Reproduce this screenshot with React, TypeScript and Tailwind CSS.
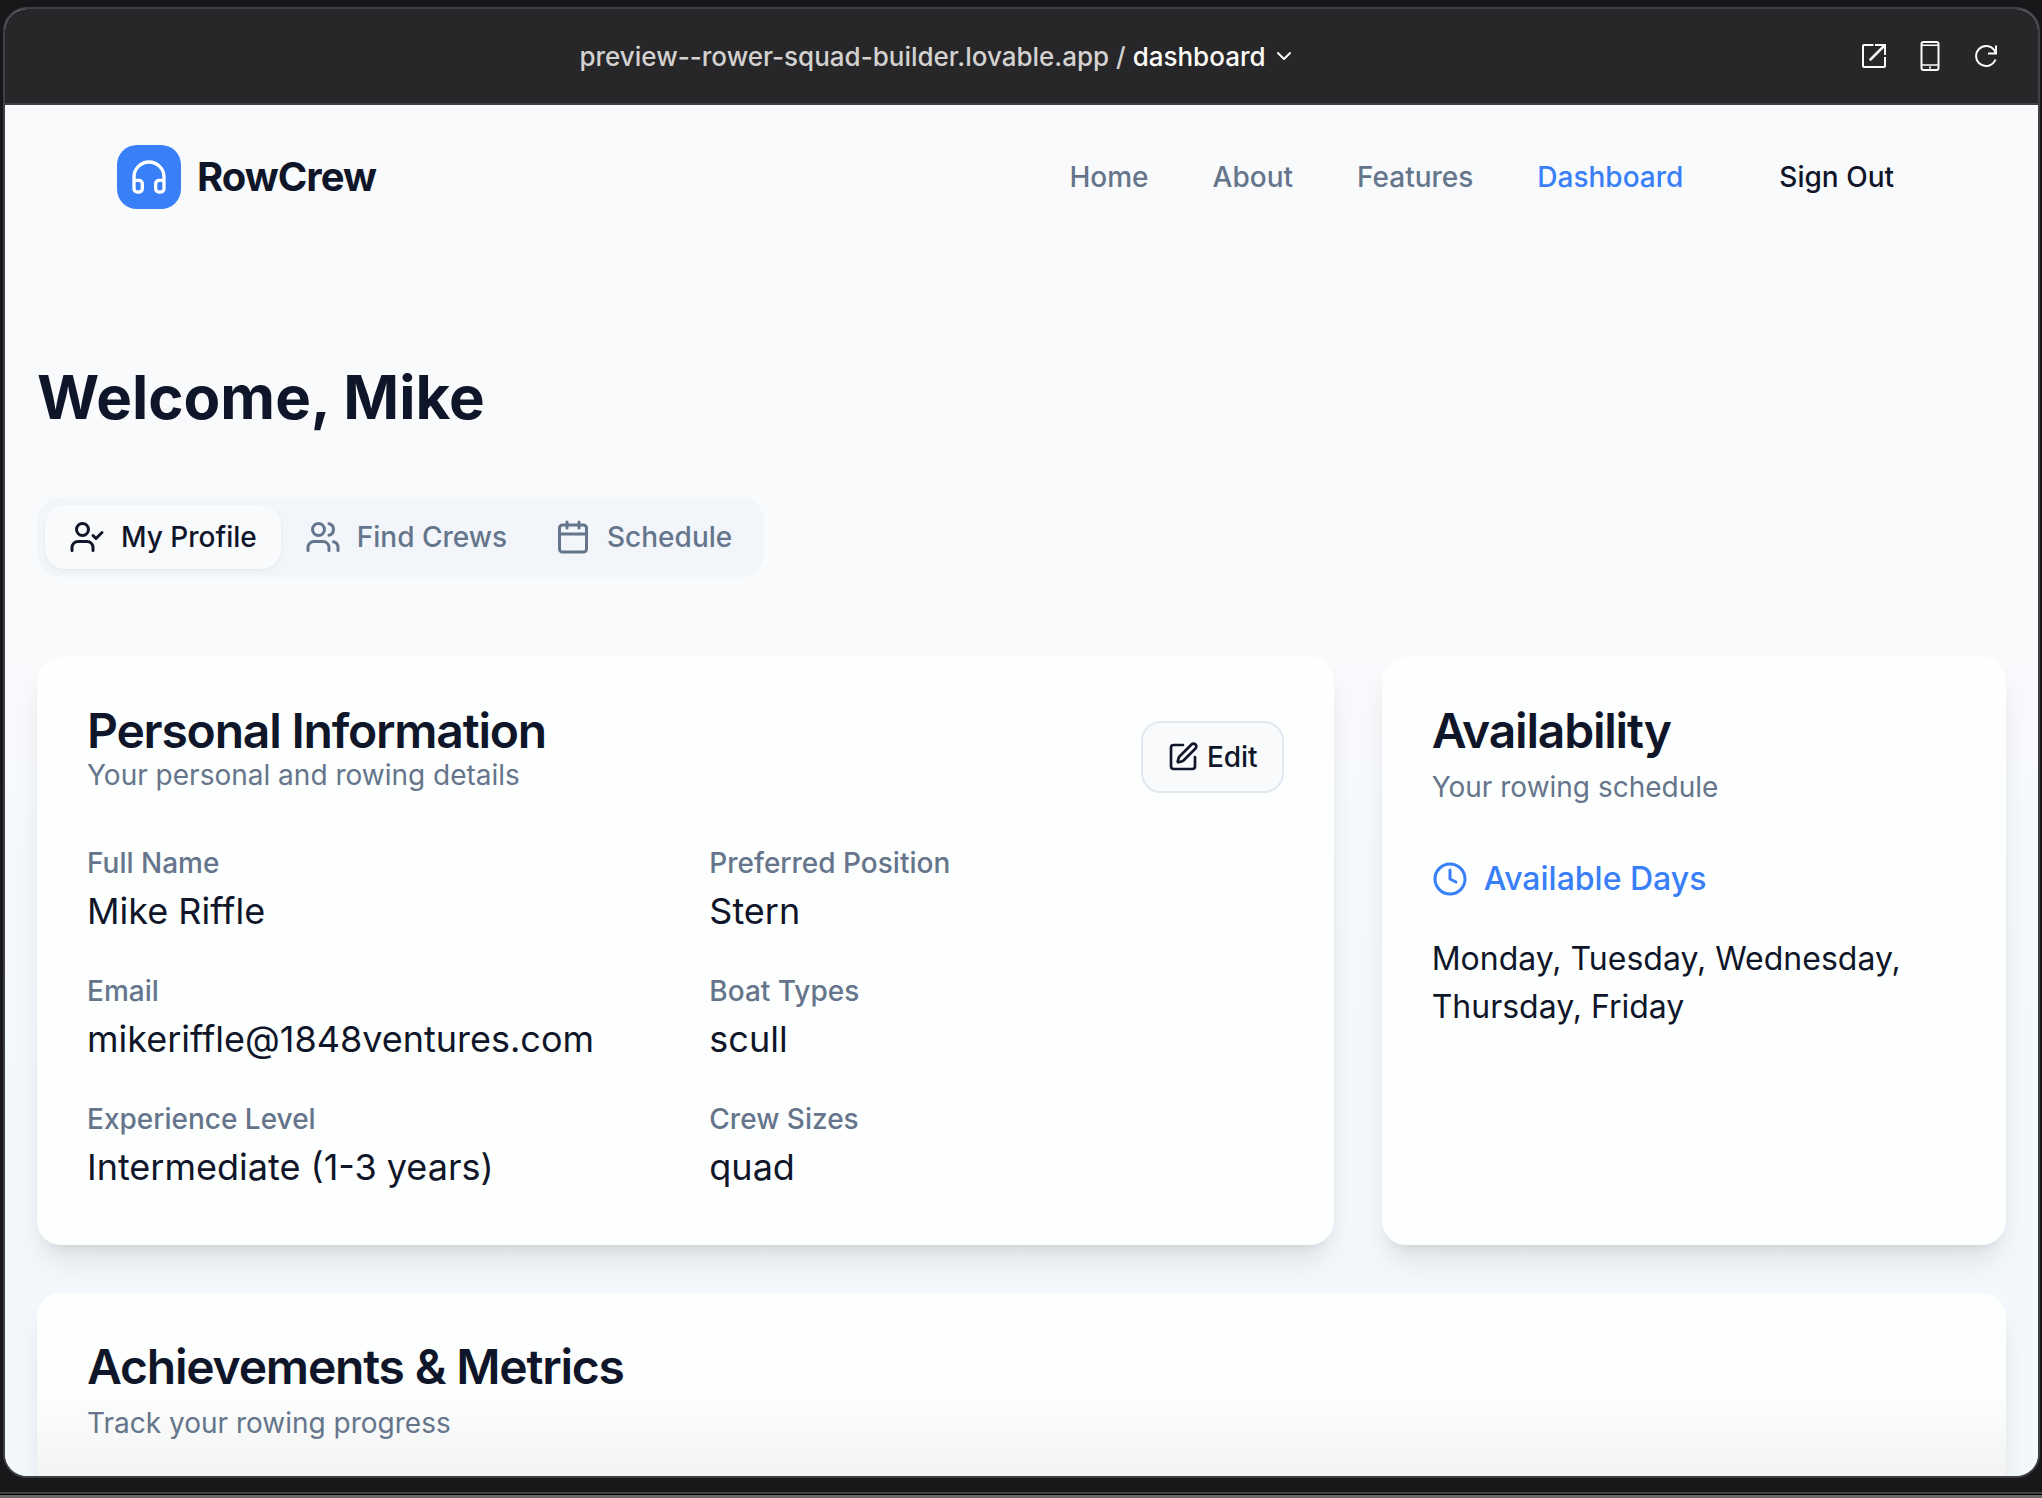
import React from "react";
import { Headphones, UserCheck, Users, Calendar, Clock, ChevronDown } from "lucide-react";

const details = [
  { label: "Full Name", value: "Mike Riffle" },
  { label: "Preferred Position", value: "Stern" },
  { label: "Email", value: "mikeriffle@1848ventures.com" },
  { label: "Boat Types", value: "scull" },
  { label: "Experience Level", value: "Intermediate (1-3 years)" },
  { label: "Crew Sizes", value: "quad" },
];

const links = ["Home", "About", "Features"];

function OpenIcon() {
  return (
    <svg width="24" height="24" viewBox="0 0 24 24" fill="none" stroke="currentColor" strokeWidth="2" aria-hidden="true">
      <path d="M11.5 1H2a1 1 0 0 0-1 1v20a1 1 0 0 0 1 1h20a1 1 0 0 0 1-1V13M13 1H23V11" />
      <path d="M22.5 1.5L8.5 15.5" strokeWidth="2.5" strokeLinecap="round" />
    </svg>
  );
}

function PhoneIcon() {
  return (
    <svg width="20" height="30" viewBox="0 0 20 30" fill="none" stroke="currentColor" strokeWidth="2" aria-hidden="true">
      <rect x="1.5" y="1" width="17" height="28" rx="2" />
      <path d="M1 4.2H19M1 24H19" strokeWidth="1.5" />
      <path d="M9 26.5h2" />
    </svg>
  );
}

function ReloadIcon() {
  return (
    <svg width="24" height="24" viewBox="0 0 24 24" fill="none" stroke="currentColor" strokeWidth="2" aria-hidden="true">
      <path d="M21.5 15.5A10 10 0 1 1 20.5 6.5L22 9.5M22 1.5V9.5H14" />
    </svg>
  );
}

function EditIcon() {
  return (
    <svg width="32" height="32" viewBox="0 0 24 24" fill="none" stroke="currentColor" strokeWidth="2" strokeLinecap="round" strokeLinejoin="round" aria-hidden="true">
      <path d="M12 3H5a2 2 0 0 0-2 2v14a2 2 0 0 0 2 2h14a2 2 0 0 0 2-2v-7" />
      <path d="M18.375 2.625a1 1 0 0 1 3 3l-9.013 9.014a2 2 0 0 1-.853.505l-2.873.84a.5.5 0 0 1-.62-.62l.84-2.873a2 2 0 0 1 .506-.852z" />
    </svg>
  );
}

function Title({ children }: { children: React.ReactNode }) {
  return <h2 className="text-[48px] leading-[48px] font-semibold tracking-tight">{children}</h2>;
}

function Subtitle({ children }: { children: React.ReactNode }) {
  return <p className="text-[28px] leading-10 text-[#65758b]">{children}</p>;
}

export default function App() {
  return (
    <div className="flex h-screen flex-col bg-[#18181a] font-['Inter',sans-serif] text-[#0f1629]">
      <div className="mt-[7px] mr-0.5 mb-3.5 ml-[3px] flex min-h-0 flex-1 flex-col overflow-hidden rounded-3xl border-2 border-[#3f3f46] bg-[#f9fafc]">
        <header className="flex h-24 shrink-0 items-center border-b-2 border-[#3f3f46] bg-[#272729] pr-10 pl-2 text-[26px] font-medium text-[#fcfbf8]">
          <div className="flex flex-1 items-center justify-center">
            <span className="whitespace-pre text-[#d3d2d0]">preview--rower-squad-builder.lovable.app / </span>
            <button type="button" className="flex items-center gap-1.5">
              dashboard
              <ChevronDown size={24} strokeWidth={2} />
            </button>
          </div>
          <div className="flex items-center gap-8">
            <button type="button" aria-label="Open in new tab" className="flex w-6 justify-center"><OpenIcon /></button>
            <button type="button" aria-label="Mobile view" className="flex w-6 justify-center"><PhoneIcon /></button>
            <button type="button" aria-label="Reload" className="flex w-6 justify-center"><ReloadIcon /></button>
          </div>
        </header>

        <div className="min-h-0 flex-1 overflow-hidden bg-linear-to-b from-[#f9fafc] from-40% to-[#f3f8fc] to-70%">
          <nav className="flex items-center justify-between px-28 py-10">
            <a href="#" className="flex items-center gap-4">
              <span className="flex size-16 items-center justify-center rounded-[20px] bg-[#387ff8] text-white">
                <Headphones size={40} />
              </span>
              <span className="text-[40px] leading-[56px] font-bold tracking-tight">RowCrew</span>
            </a>
            <div className="flex items-center gap-16 text-[28px] leading-10 font-medium text-[#65758b]">
              {links.map((l) => (
                <a key={l} href="#">{l}</a>
              ))}
              <a href="#" className="text-[#387ff8]">Dashboard</a>
              <button type="button" className="px-8 text-[#0f1629]">Sign Out</button>
            </div>
          </nav>

          <main className="px-8 pt-28">
            <h1 className="text-[60px] leading-[72px] font-bold">Welcome, Mike</h1>

            <div role="tablist" className="mt-16 flex w-fit rounded-3xl bg-[#f2f5fa] p-2 text-[28px] leading-10 font-medium text-[#65758b]">
              <button type="button" role="tab" aria-selected="true" className="flex items-center gap-4 rounded-[20px] bg-[#f9fafc] px-6 py-3 text-[#0f1629] shadow-[0_2px_4px_0_rgb(0_0_0/0.05)]">
                <UserCheck size={36} />
                My Profile
              </button>
              <button type="button" role="tab" aria-selected="false" className="flex items-center gap-4 px-6 py-3">
                <Users size={36} />
                Find Crews
              </button>
              <button type="button" role="tab" aria-selected="false" className="flex items-center gap-4 px-6 py-3">
                <Calendar size={36} />
                Schedule
              </button>
            </div>

            <div className="mt-20 grid grid-cols-3 gap-12">
              <section className="col-span-2 rounded-3xl bg-[#fdfefe] p-[50px] shadow-[0_20px_30px_-6px_rgb(0_0_0/0.1),0_8px_12px_-8px_rgb(0_0_0/0.1)]">
                <div className="flex items-center justify-between">
                  <div>
                    <Title>Personal Information</Title>
                    <Subtitle>Your personal and rowing details</Subtitle>
                  </div>
                  <button type="button" className="mt-3 flex h-[72px] items-center gap-2 rounded-[20px] border-2 border-slate-200 bg-[#f9fafc] px-6 text-[28px] font-medium">
                    <EditIcon />
                    Edit
                  </button>
                </div>
                <dl className="mt-12 grid grid-cols-2 gap-x-12 gap-y-8">
                  {details.map((d) => (
                    <div key={d.label}>
                      <dt className="text-[28px] leading-10 font-medium text-[#65758b]">{d.label}</dt>
                      <dd className="text-[36px] leading-[56px]">{d.value}</dd>
                    </div>
                  ))}
                </dl>
              </section>

              <section className="rounded-3xl bg-[#fdfefe] p-[50px] shadow-[0_20px_30px_-6px_rgb(0_0_0/0.1),0_8px_12px_-8px_rgb(0_0_0/0.1)]">
                <div className="flex flex-col gap-3">
                  <Title>Availability</Title>
                  <Subtitle>Your rowing schedule</Subtitle>
                </div>
                <h3 className="mt-12 flex items-center gap-4 text-[32px] leading-[48px] font-medium text-[#387ff8]">
                  <Clock size={36} />
                  Available Days
                </h3>
                <p className="mt-8 text-[32px] leading-[48px]">Monday, Tuesday, Wednesday, Thursday, Friday</p>
              </section>

              <section className="col-span-3 flex h-80 flex-col gap-3 rounded-3xl bg-linear-to-b from-[#fdfefe] from-30% to-[#eeeeee] to-70% p-[50px] shadow-[0_20px_30px_-6px_rgb(0_0_0/0.1),0_8px_12px_-8px_rgb(0_0_0/0.1)]">
                <Title>Achievements &amp; Metrics</Title>
                <Subtitle>Track your rowing progress</Subtitle>
              </section>
            </div>
          </main>
        </div>
      </div>
      <div className="h-1.5 shrink-0 border-t-2 border-[#444444] bg-[#6a6a6a] shadow-[inset_0_1px_0_#000000]" />
    </div>
  );
}
